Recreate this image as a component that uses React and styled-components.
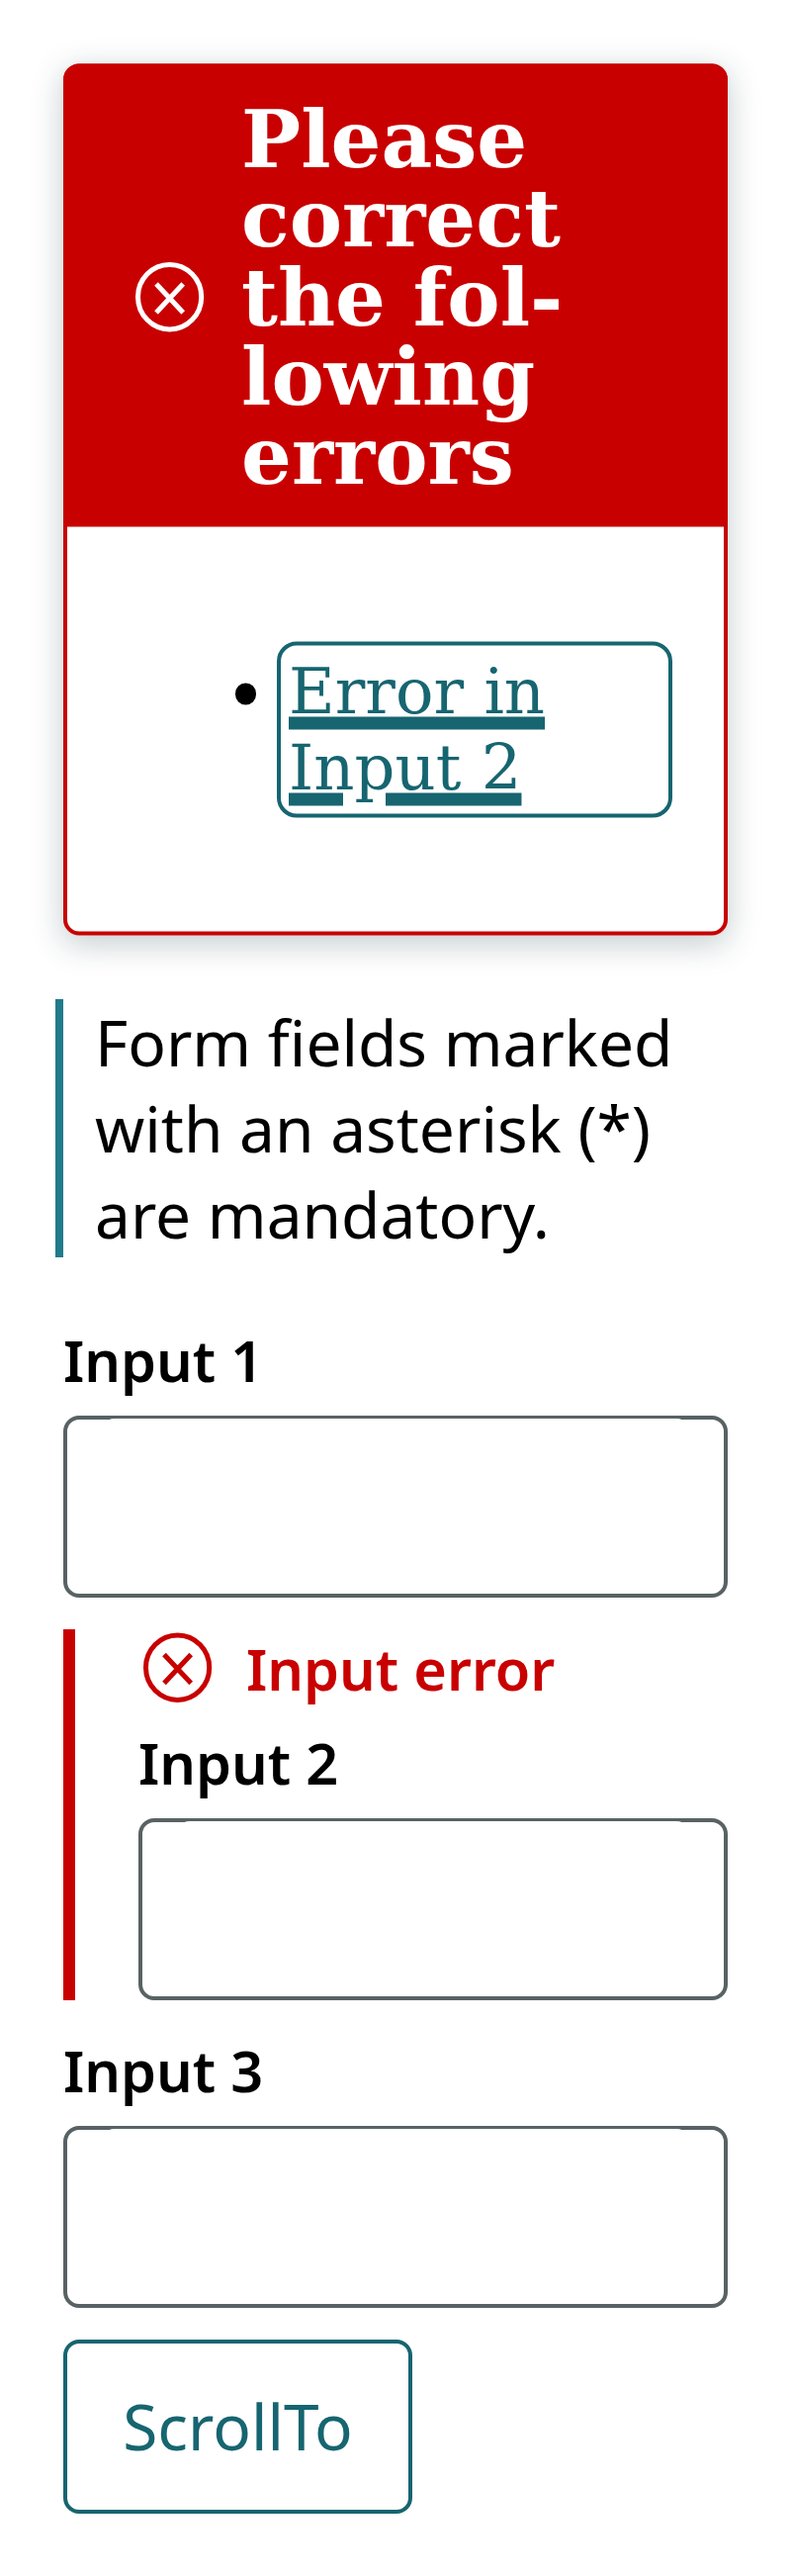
import React from "react";
import styled, { createGlobalStyle } from "styled-components";

const RED = "#c80000";
const TEAL = "#166570";
const GREY = "#586264";

const GlobalStyle = createGlobalStyle`
  *, *::before, *::after { box-sizing: border-box; }
  body { margin: 0; background: #fff; color: #000; font-family: "Noto Sans", sans-serif; }
`;

const Page = styled.main`
  width: 800px;
  height: 2604px;
  padding: 64px;
  overflow: hidden;
`;

const ErrorCard = styled.section`
  height: 881px;
  border: 4px solid ${RED};
  border-radius: 16px;
  background: #fff;
  box-shadow: 0 8px 32px rgba(20, 50, 60, 0.25);
  transform: translateY(0.5px);
  font-family: "DejaVu Serif", serif;
`;

const CardHeader = styled.header`
  display: flex;
  align-items: center;
  gap: 36px;
  height: 468px;
  margin: -4px -4px 0;
  padding: 4px 68px 0 72px;
  border-radius: 16px 16px 0 0;
  background: ${RED};
  color: #fff;
`;

const CardTitle = styled.h2`
  flex: 1;
  margin: 0;
  font-size: 80px;
  line-height: 80px;
  font-weight: 700;
`;

const ErrorList = styled.ul`
  margin: 0;
  padding: 116px 52px 0 169.5px;
  list-style: none;
  font-size: 64px;
  line-height: 76.8px;
`;

const ErrorItem = styled.li`
  display: flex;
  gap: 21px;

  &::before {
    content: "";
    flex: none;
    width: 21.5px;
    height: 21.5px;
    margin-top: 42px;
    border-radius: 50%;
    background: #000;
  }
`;

const ErrorLink = styled.a`
  flex: 1;
  padding: 8px;
  border: 4px solid ${TEAL};
  border-radius: 20px;
  color: ${TEAL};
  text-decoration: underline;
  text-decoration-thickness: 13px;
  text-underline-offset: 4px;
`;

const Note = styled.p`
  margin: 65px 0 65px -8px;
  padding-left: 32px;
  border-left: 8px solid #227a8b;
  font-size: 64px;
  line-height: 87px;
`;

const Field = styled.div`
  margin-bottom: 32px;
  ${(p) => p.$invalid && `padding-left: 64px; border-left: 12px solid ${RED};`}
`;

const Label = styled.label`
  display: block;
  height: 95px;
  font-size: 57.6px;
  line-height: 77px;
  font-weight: 600;
`;

const InputFrame = styled.div`
  height: 184px;
  padding: 0 32px;
  border: 4px solid ${GREY};
  border-radius: 16px;
`;

const Input = styled.input`
  display: block;
  width: 100%;
  height: 177px;
  margin-top: -1px;
  padding: 0;
  border: 0;
  border-radius: 16px;
  outline: 0;
  background: #fff;
  font: inherit;
`;

const Message = styled.div`
  display: flex;
  align-items: center;
  gap: 33px;
  height: 96px;
  padding: 0 0 18px 4px;
  color: ${RED};
  font-size: 57.6px;
  line-height: 78px;
  font-weight: 600;
`;

const MessageText = styled.span`
  padding-top: 2px;
`;

const Button = styled.button`
  display: block;
  width: 353px;
  height: 176px;
  padding: 0 0 2px;
  border: 4px solid ${TEAL};
  border-radius: 16px;
  background: #fff;
  color: ${TEAL};
  font: 400 64px "Noto Sans", sans-serif;
`;

const Icon = styled.svg`
  flex: none;
  width: 72px;
  height: 72px;
`;

function ErrorIcon() {
  return (
    <Icon viewBox="0 0 72 72" fill="none" stroke="currentColor" aria-hidden="true">
      <ellipse cx="35.6" cy="35.7" rx="32.1" ry="32.7" strokeWidth="5" />
      <path d="M22 22.5L49.2 51.5M49.2 22.5L22 51.5" strokeWidth="5" />
    </Icon>
  );
}

function TextField({ id, label, error }) {
  return (
    <Field $invalid={!!error}>
      {error && (
        <Message>
          <ErrorIcon />
          <MessageText>{error}</MessageText>
        </Message>
      )}
      <Label htmlFor={id}>{label}</Label>
      <InputFrame>
        <Input id={id} />
      </InputFrame>
    </Field>
  );
}

export default function App() {
  return (
    <>
      <GlobalStyle />
      <Page>
        <ErrorCard>
          <CardHeader>
            <ErrorIcon />
            <CardTitle>Please correct the fol&shy;lowing errors</CardTitle>
          </CardHeader>
          <ErrorList>
            <ErrorItem>
              <ErrorLink href="#input-2">Error in Input 2</ErrorLink>
            </ErrorItem>
          </ErrorList>
        </ErrorCard>
        <Note>Form fields marked with an asterisk (*) are mandatory.</Note>
        <TextField id="input-1" label="Input 1" />
        <TextField id="input-2" label="Input 2" error="Input error" />
        <TextField id="input-3" label="Input 3" />
        <Button type="button">ScrollTo</Button>
      </Page>
    </>
  );
}
